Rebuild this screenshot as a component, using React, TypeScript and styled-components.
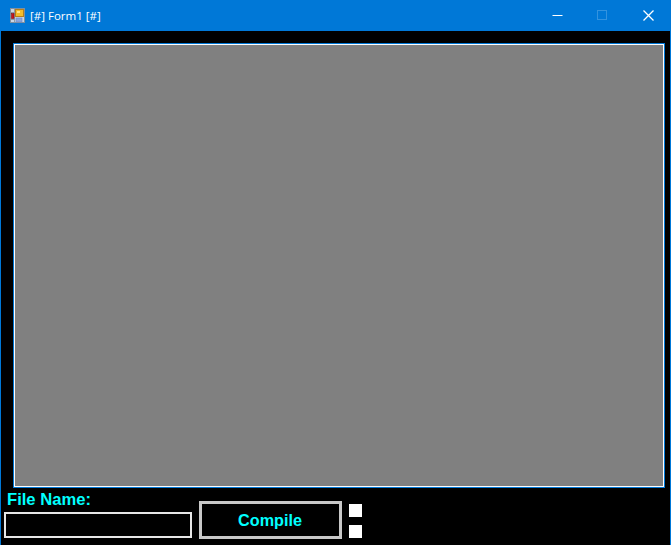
import React from 'react';
import styled, { createGlobalStyle } from 'styled-components';

const GlobalStyle = createGlobalStyle`
  html, body {
    margin: 0;
    padding: 0;
    background: #000;
  }
`;

const Window = styled.div`
  width: 671px;
  height: 545px;
  box-sizing: border-box;
  background: #000;
  border-left: 1px solid #0078d7;
  border-right: 1px solid #0078d7;
  overflow: hidden;
  display: flex;
  flex-direction: column;
`;

const TitleBar = styled.div`
  height: 31px;
  flex: none;
  margin: 0 -1px;
  background: #0078d7;
  display: flex;
  align-items: center;
  padding-left: 10px;
  color: #fff;
  font: 11.5px "Open Sans", "Noto Sans", sans-serif;
`;

const Title = styled.span`
  margin-left: 5px;
  flex: 1;
`;

const WinButton = styled.div<{ $wide?: boolean }>`
  width: ${(p) => (p.$wide ? '46px' : '45px')};
  height: 31px;
  display: flex;
  align-items: center;
  justify-content: center;
`;

const Content = styled.div`
  flex: 1;
  display: flex;
  flex-direction: column;
  padding: 12px 5px 0 3px;
`;

const Canvas = styled.div`
  height: 443px;
  box-sizing: border-box;
  background: #808080;
  border: 1px solid #fff;
  outline: 1px solid #0078d7;
  margin-top: 1px;
  width: 650px;
  margin-left: 10px;
`;

const BottomRow = styled.div`
  display: flex;
  margin-top: 1px;
`;

const FileColumn = styled.div`
  width: 188px;
  display: flex;
  flex-direction: column;
`;

const FileLabel = styled.label`
  height: 24px;
  padding: 2px 0 0 3px;
  box-sizing: border-box;
  color: #00ffff;
  font: bold 16.6px "Liberation Sans", Arial, sans-serif;
`;

const FileInput = styled.input`
  width: 188px;
  height: 26px;
  box-sizing: border-box;
  background: #000;
  border: 2px solid #e6e6e6;
  outline: none;
  padding: 0;
`;

const CompileButton = styled.button`
  width: 143px;
  height: 38px;
  margin: 13px 0 0 7px;
  box-sizing: border-box;
  background: #000;
  border: 3px solid #c8c8c8;
  color: #00ffff;
  font: bold 16.2px "Liberation Sans", Arial, sans-serif;
  padding: 0 1px 0 0;
`;

const CheckColumn = styled.div`
  display: flex;
  flex-direction: column;
  gap: 8px;
  margin: 16px 0 0 7px;
`;

const Check = styled.div`
  width: 13px;
  height: 13px;
  background: #fff;
`;

const AppIcon = () => (
  <svg width="15" height="15" viewBox="0 0 15 15">
    <rect x="0.5" y="0.5" width="14" height="14" fill="#c9d6e4" stroke="#7f8f9e" />
    <path d="M0.5 4.5H4.5M4.5 0.5V14.5M0.5 11.5H4.5" stroke="#8b9aa8" fill="none" />
    <rect x="5.5" y="1.5" width="8" height="7" fill="#f2bd2c" stroke="#b5801a" />
    <rect x="7" y="3" width="3" height="2" fill="#fce38a" />
    <rect x="1.5" y="5.5" width="2.5" height="5" fill="#c8161c" stroke="#7d0c10" strokeWidth="0.6" />
    <rect x="6" y="10" width="6" height="4" fill="#8aa6dc" stroke="#6f87c2" strokeWidth="0.6" />
  </svg>
);

const App: React.FC = () => {
  return (
    <>
      <GlobalStyle />
      <Window>
        <TitleBar>
          <AppIcon />
          <Title>[#] Form1 [#]</Title>
          <WinButton>
            <svg width="11" height="11" viewBox="0 0 11 11">
              <path d="M0.5 5.5H10.5" stroke="#fff" fill="none" />
            </svg>
          </WinButton>
          <WinButton>
            <svg width="11" height="11" viewBox="0 0 11 11">
              <rect x="0.5" y="0.5" width="9" height="9" stroke="#3393df" fill="none" />
            </svg>
          </WinButton>
          <WinButton $wide>
            <svg width="11" height="11" viewBox="0 0 11 11">
              <path d="M0.5 0.5L10.5 10.5M10.5 0.5L0.5 10.5" stroke="#fff" strokeWidth="1.3" fill="none" />
            </svg>
          </WinButton>
        </TitleBar>
        <Content>
          <Canvas />
          <BottomRow>
            <FileColumn>
              <FileLabel>File Name:</FileLabel>
              <FileInput />
            </FileColumn>
            <CompileButton>Compile</CompileButton>
            <CheckColumn>
              <Check />
              <Check />
            </CheckColumn>
          </BottomRow>
        </Content>
      </Window>
    </>
  );
};

export default App;
